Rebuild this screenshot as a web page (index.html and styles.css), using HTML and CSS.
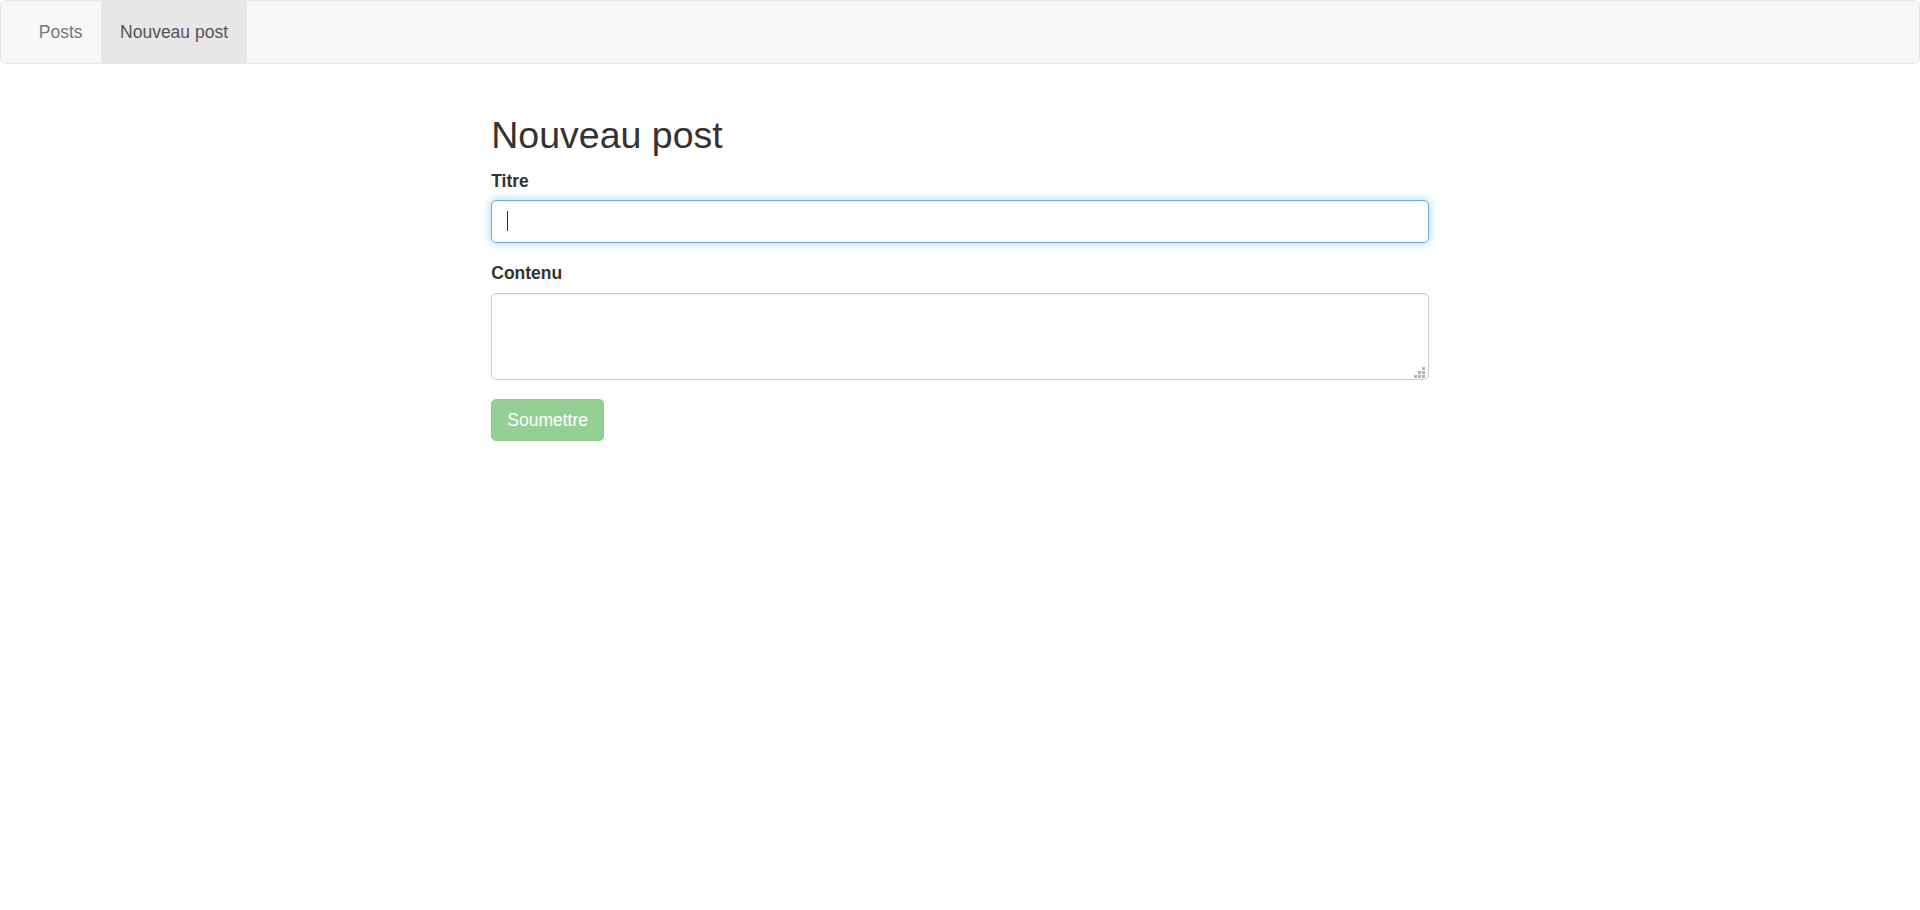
FILE: index.html
```html
<!DOCTYPE html>
<html lang="fr">
<head>
<meta charset="utf-8">
<title>Nouveau post</title>
<link rel="stylesheet" href="styles.css">
</head>
<body>
<nav class="navbar">
  <ul class="nav">
    <li><a class="nav-link" href="#">Posts</a></li>
    <li><a class="nav-link active" href="#">Nouveau post</a></li>
  </ul>
</nav>
<main class="main">
  <h2 class="title">Nouveau post</h2>
  <form class="form">
    <div class="form-group">
      <label class="label" for="titre">Titre</label>
      <div class="field-wrap">
        <input class="form-control focused" id="titre" type="text">
        <span class="caret"></span>
      </div>
    </div>
    <div class="form-group">
      <label class="label" for="contenu">Contenu</label>
      <div class="field-wrap">
        <textarea class="form-control textarea" id="contenu"></textarea>
        <svg class="grip" width="11" height="11" viewBox="0 0 11 11" aria-hidden="true">
          <rect x="8" y="0" width="3" height="3" fill="#b3b3b3"/>
          <rect x="4" y="4" width="3" height="3" fill="#b3b3b3"/>
          <rect x="8" y="4" width="3" height="3" fill="#b3b3b3"/>
          <rect x="0" y="8" width="3" height="3" fill="#b3b3b3"/>
          <rect x="4" y="8" width="3" height="3" fill="#b3b3b3"/>
          <rect x="8" y="8" width="3" height="3" fill="#b3b3b3"/>
        </svg>
      </div>
    </div>
    <button class="btn" type="button" disabled>Soumettre</button>
  </form>
</main>
</body>
</html>
```

FILE: styles.css
```css
* {
  box-sizing: border-box;
}

html, body {
  margin: 0;
  padding: 0;
  background: #fff;
}

body {
  font-family: "Liberation Sans", Arial, Helvetica, sans-serif;
  font-size: 17.5px;
  line-height: 25px;
  color: #333;
}

.navbar {
  height: 64px;
  background: #f8f8f8;
  border: 1px solid #e7e7e7;
  border-radius: 5px;
  padding: 0 19px;
  margin-bottom: 25px;
}

.nav {
  list-style: none;
  margin: 0;
  padding: 0;
  display: flex;
  height: 62px;
}

.nav-link {
  display: block;
  padding: 18.5px 18.75px;
  line-height: 25px;
  color: #777;
  text-decoration: none;
  height: 62px;
}

.nav-link.active {
  background: #e7e7e7;
  color: #555;
}

.main {
  display: flow-root;
  width: 937.5px;
  margin: 0 auto;
}

.title {
  font-size: 37.5px;
  font-weight: 500;
  line-height: 41.25px;
  margin: 26px 0 12.5px;
  color: #333;
}

.form-group {
  margin-bottom: 18.75px;
}

.label {
  display: block;
  font-weight: bold;
  margin-bottom: 6.25px;
  line-height: 25px;
}

.field-wrap {
  position: relative;
}

.form-control {
  display: block;
  width: 100%;
  height: 42.5px;
  padding: 7.5px 15px;
  font-family: inherit;
  font-size: 17.5px;
  line-height: 25px;
  color: #555;
  background: #fff;
  border: 1px solid #ccc;
  border-radius: 5px;
  box-shadow: inset 0 1px 1px rgba(0, 0, 0, 0.075);
  outline: none;
  margin: 0;
}

.form-control.focused {
  border-color: #66afe9;
  box-shadow: inset 0 1px 1px rgba(0, 0, 0, 0.075), 0 0 10px rgba(102, 175, 233, 0.6);
}

.caret {
  position: absolute;
  left: 16px;
  top: 11px;
  width: 1px;
  height: 20px;
  background: #333;
}

.textarea {
  height: 87.5px;
  resize: none;
}

.grip {
  position: absolute;
  right: 4px;
  bottom: 2px;
  display: block;
}

.btn {
  display: inline-block;
  height: 42.5px;
  padding: 7.5px 15px;
  font-family: inherit;
  font-size: 17.5px;
  line-height: 25px;
  color: #fff;
  background: #5cb85c;
  border: 1px solid #4cae4c;
  border-radius: 5px;
  opacity: 0.65;
  cursor: not-allowed;
}
```
